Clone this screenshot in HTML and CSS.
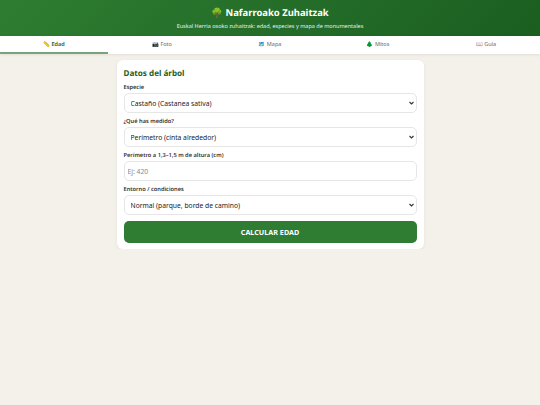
FILE: index.html
```html
<!DOCTYPE html>
<html lang="es">
<head>
    <meta charset="UTF-8">
    <title>Nafarroako Zuhaitzak</title>
    <link rel="stylesheet" href="styles.css">
</head>
<body>
<header class="top">
    <h1>🌳 Nafarroako Zuhaitzak</h1>
    <p>Euskal Herria osoko zuhaitzak: edad, especies y mapa de monumentales</p>
</header>

<nav class="tabs">
    <div class="tab active">📏 Edad</div>
    <div class="tab">📷 Foto</div>
    <div class="tab">🗺️ Mapa</div>
    <div class="tab">🌲 Mitos</div>
    <div class="tab">📖 Guía</div>
</nav>

<main class="content">
    <form class="card">
        <h2>Datos del árbol</h2>

        <label for="especie">Especie</label>
        <select id="especie">
            <option>Castaño (Castanea sativa)</option>
        </select>

        <label for="medida">¿Qué has medido?</label>
        <select id="medida">
            <option>Perímetro (cinta alrededor)</option>
        </select>

        <label for="perimetro">Perímetro a 1,3–1,5 m de altura (cm)</label>
        <input id="perimetro" type="number" placeholder="Ej: 420">

        <label for="entorno">Entorno / condiciones</label>
        <select id="entorno">
            <option>Normal (parque, borde de camino)</option>
        </select>

        <button type="button" class="btn">CALCULAR EDAD</button>
    </form>
</main>
</body>
</html>
```

FILE: styles.css
```css
* {
    margin: 0;
    padding: 0;
    box-sizing: border-box;
}
body {
    background-color: #f4f1ea;
    color: #222222;
    font-family: "Noto Sans", "Open Sans", sans-serif;
    font-size: 7px;
    text-rendering: geometricPrecision;
}
.top {
    height: 36px;
    padding-top: 5px;
    text-align: center;
    color: #ffffff;
    background: linear-gradient(135deg, #2e7d32, #1b5e20);
}
.top h1 {
    font-size: 9.45px;
    line-height: 15px;
    font-weight: 700;
}
.top p {
    margin-top: 2px;
    font-size: 5.5px;
    line-height: 8px;
    opacity: 0.9;
}
.tabs {
    display: flex;
    height: 18px;
    background-color: #ffffff;
    box-shadow: 0 1px 3px rgba(0, 0, 0, 0.08);
}
.tab {
    flex: 1;
    text-align: center;
    font-size: 5.5px;
    line-height: 17px;
    color: #666666;
    border-bottom: 2px solid transparent;
}
.tab.active {
    color: #1b5e20;
    font-weight: 600;
    border-bottom-color: #78a37b;
}
.content {
    width: 307px;
    margin: 6px auto 0;
}
.card {
    display: flex;
    flex-direction: column;
    padding: 8px 7px 6px;
    background-color: #ffffff;
    border-radius: 6px;
    box-shadow: 0 1px 4px rgba(0, 0, 0, 0.06);
}
.card h2 {
    font-size: 8.1px;
    line-height: 12px;
    font-weight: 700;
    color: #1b5e20;
    margin-bottom: 3px;
}
.card label {
    font-size: 5.7px;
    line-height: 8px;
    font-weight: 600;
    color: #333333;
    margin-bottom: 2px;
}
.card select,
.card input {
    height: 20px;
    width: 100%;
    margin-bottom: 4px;
    padding: 0 6px;
    font-family: inherit;
    font-size: 6.75px;
    color: #222222;
    background-color: #ffffff;
    border: 1px solid #e6e6e6;
    border-radius: 5px;
}
.card select {
    appearance: none;
    background-image: url("data:image/svg+xml,%3Csvg xmlns='http://www.w3.org/2000/svg' width='5' height='4' viewBox='0 0 5 4'%3E%3Cpath d='M.5 1 2.5 3 4.5 1' fill='none' stroke='%23333' stroke-width='1.1'/%3E%3C/svg%3E");
    background-repeat: no-repeat;
    background-position: right 1.5px center;
}
.card input {
    padding: 0 3px;
}
.card input::placeholder {
    color: #8a8a8a;
}
.btn {
    height: 22px;
    margin-top: 2px;
    font-family: inherit;
    font-size: 7.2px;
    font-weight: 700;
    color: #ffffff;
    background-color: #2e7d32;
    border: none;
    border-radius: 5px;
}
```
